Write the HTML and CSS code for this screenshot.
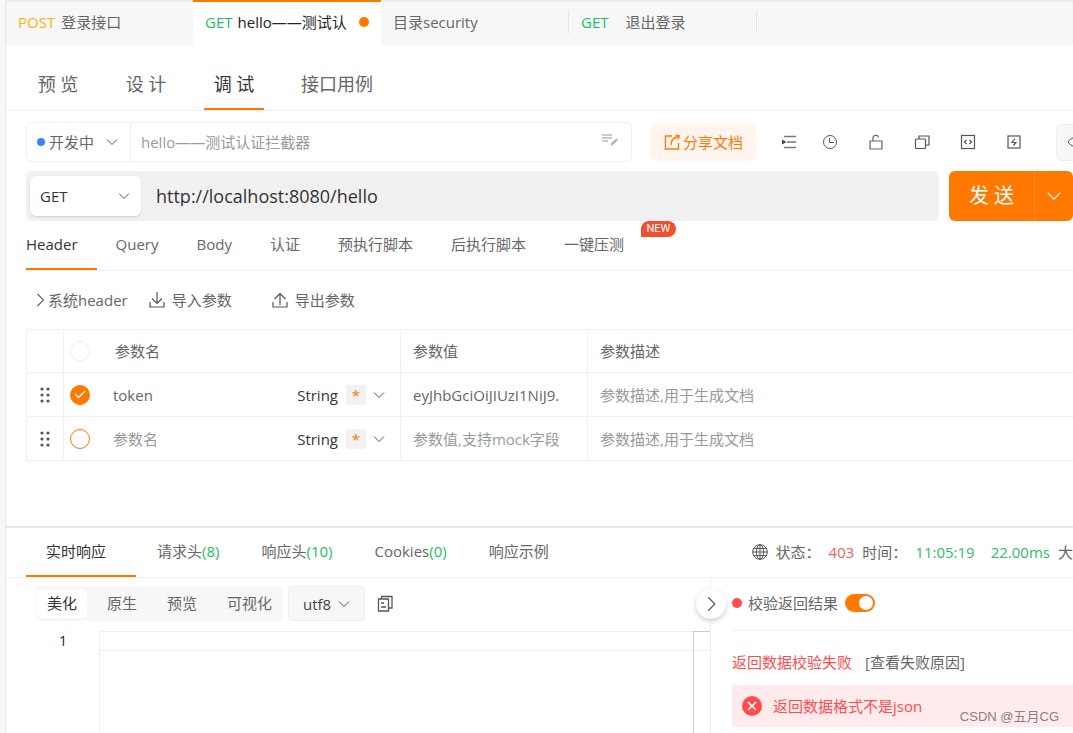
FILE: index.html
```html
<!DOCTYPE html>
<html lang="zh-CN">
<head>
<meta charset="utf-8">
<title>接口调试</title>
<link rel="stylesheet" href="styles.css">
</head>
<body>
<svg class="defs" aria-hidden="true">
  <symbol id="down" viewBox="0 0 12 8"><path d="M1 1.500 6 6.500 11 1.500" fill="none" stroke="currentColor"/></symbol>
  <symbol id="right" viewBox="0 0 8 14"><path d="M1 1 7 7 1 13" fill="none" stroke="currentColor" stroke-width="1.200"/></symbol>
  <symbol id="grip" viewBox="0 0 10 16"><g fill="#555"><circle cx="2" cy="2" r="1.600"/><circle cx="8" cy="2" r="1.600"/><circle cx="2" cy="8" r="1.600"/><circle cx="8" cy="8" r="1.600"/><circle cx="2" cy="14" r="1.600"/><circle cx="8" cy="14" r="1.600"/></g></symbol>
</svg>
<div class="app">
  <header class="file-tabs">
    <button class="file-tab"><span class="post">POST</span><span>登录接口</span></button>
    <button class="file-tab active"><span class="get">GET</span><span>hello——测试认</span><i class="unsaved"></i></button>
    <button class="file-tab divided"><span>目录security</span></button>
    <button class="file-tab divided spaced"><span class="get">GET</span><span>退出登录</span></button>
  </header>

  <nav class="mode-tabs">
    <button class="mode">预 览</button>
    <button class="mode">设 计</button>
    <button class="mode active">调 试</button>
    <button class="mode">接口用例</button>
  </nav>

  <main class="request">
    <div class="name-row">
      <div class="name-box">
        <button class="state"><i class="blue-dot"></i>开发中<svg class="chev"><use href="#down"/></svg></button>
        <input class="name-input" aria-label="接口名称" placeholder="hello——测试认证拦截器">
        <button class="plain note" aria-label="备注"><svg width="18" height="14" viewBox="0 0 18 14"><path d="M1 2h10M1 5h10M1 8h6" fill="none" stroke="#bbb" stroke-width="1.600"/><path d="M9.500 13l1-3 4.500-4 1.500 1.500-5 4.500z" fill="#aaa"/><path d="M15.500 5.500 17 7" stroke="#aaa"/></svg></button>
      </div>
      <button class="share"><svg width="17" height="17" viewBox="0 0 17 17" fill="none" stroke="currentColor" stroke-width="1.300"><path d="M8 2H1.500v13h13V9"/><path d="M7 11c0-4 2-7.500 7.500-8.500M11.500.800l4 1.200-2 3.500"/></svg>分享文档</button>
      <div class="tools">
        <button class="tool first" aria-label="缩进"><svg viewBox="0 0 16 16"><path d="M3 2.500h12M6 8h9M3 13.500h12" stroke="#777" stroke-width="1.300"/><path d="M1 5.500 5.500 8 1 10.500z" fill="#444"/></svg></button>
        <button class="tool" aria-label="历史"><svg viewBox="0 0 16 16" fill="none" stroke="#555"><circle cx="8" cy="8" r="6.500"/><path d="M7.500 4v4.500H12"/></svg></button>
        <button class="tool" aria-label="锁定"><svg viewBox="0 0 16 16" fill="none" stroke="#666" stroke-width="1.200"><path d="M2 7h12v8H2zM5 7V4c0-3.500 5.500-3.500 5.500-.500"/></svg></button>
        <button class="tool" aria-label="复制"><svg viewBox="0 0 16 16" fill="none" stroke="#555" stroke-width="1.200"><rect x="1.500" y="5" width="10" height="9.500" rx="1"/><path d="M5 5V2h10v9h-3.500"/></svg></button>
        <button class="tool" aria-label="代码"><svg viewBox="0 0 16 16" fill="none" stroke="#555" stroke-width="1.200"><rect x="1.500" y="1.500" width="13" height="13"/><path d="M6.500 6 4.500 8l2 2M9.500 6l2 2-2 2"/></svg></button>
        <button class="tool" aria-label="快捷"><svg viewBox="0 0 16 16" fill="none" stroke="#555" stroke-width="1.200"><rect x="2" y="2" width="12" height="12"/><path d="M9 4.500 6 8.500h4L7.500 11.500"/></svg></button>
      </div>
      <button class="view" aria-label="查看"><svg width="20" height="12" viewBox="0 0 20 12" fill="none" stroke="#555"><path d="M1 6c4-6.500 14-6.500 18 0-4 6.500-14 6.500-18 0z"/><circle cx="10" cy="6" r="3"/></svg></button>
    </div>

    <div class="url-row">
      <div class="url-box">
        <div class="method"><select aria-label="请求方法"><option>GET</option><option>POST</option></select><svg class="chev"><use href="#down"/></svg></div>
        <input class="url" aria-label="请求地址" value="http://localhost:8080/hello">
      </div>
      <div class="send-group">
        <button class="send">发 送</button>
        <button class="send-more" aria-label="更多发送选项"><svg width="16" height="10"><use href="#down"/></svg></button>
      </div>
    </div>

    <nav class="param-tabs">
      <button class="ptab active">Header</button>
      <button class="ptab">Query</button>
      <button class="ptab">Body</button>
      <button class="ptab">认证</button>
      <button class="ptab">预执行脚本</button>
      <button class="ptab">后执行脚本</button>
      <button class="ptab">一键压测<span class="new">NEW</span></button>
    </nav>

    <div class="actions">
      <button class="action system"><svg width="9" height="14"><use href="#right"/></svg>系统header</button>
      <button class="action"><svg width="16" height="16" viewBox="0 0 16 16" fill="none" stroke="#555" stroke-width="1.200"><path d="M8 0v11M3 6.500l5 5 5-5M1 10v5h14v-5"/></svg>导入参数</button>
      <button class="action export"><svg width="16" height="16" viewBox="0 0 16 16" fill="none" stroke="#555" stroke-width="1.200"><path d="M8 13V2M2.500 7 8 1.500 13.500 7M1 10v5h14v-5"/></svg>导出参数</button>
    </div>

    <table class="params">
      <colgroup><col class="c-grip"><col class="c-name"><col class="c-value"><col></colgroup>
      <thead>
        <tr>
          <th></th>
          <th><div class="name-cell"><input type="checkbox" class="check faint" aria-label="全选"><span class="head-name">参数名</span></div></th>
          <th>参数值</th>
          <th>参数描述</th>
        </tr>
      </thead>
      <tbody>
        <tr>
          <td class="grip"><svg width="10" height="16"><use href="#grip"/></svg></td>
          <td><div class="name-cell"><span class="check-wrap"><input type="checkbox" class="check" aria-label="启用 token" checked><svg class="tick" width="12" height="9" viewBox="0 0 12 9"><path d="M1 4l3.500 3.500L11 1" fill="none" stroke="#fff" stroke-width="1.300"/></svg></span><input class="cell" aria-label="参数名" value="token"><button class="type">String<span class="star">*</span><svg class="chev"><use href="#down"/></svg></button></div></td>
          <td><input class="cell" aria-label="参数值" value="eyJhbGciOiJIUzI1NiJ9."></td>
          <td><input class="cell" aria-label="参数描述" placeholder="参数描述,用于生成文档"></td>
        </tr>
        <tr>
          <td class="grip"><svg width="10" height="16"><use href="#grip"/></svg></td>
          <td><div class="name-cell"><span class="check-wrap"><input type="checkbox" class="check" aria-label="启用参数"></span><input class="cell" aria-label="参数名" placeholder="参数名"><button class="type">String<span class="star">*</span><svg class="chev"><use href="#down"/></svg></button></div></td>
          <td><input class="cell" aria-label="参数值" placeholder="参数值,支持mock字段"></td>
          <td><input class="cell" aria-label="参数描述" placeholder="参数描述,用于生成文档"></td>
        </tr>
      </tbody>
    </table>
  </main>

  <section class="response">
    <div class="res-head">
      <nav class="res-tabs">
        <button class="rtab active">实时响应</button>
        <button class="rtab">请求头<b>(8)</b></button>
        <button class="rtab">响应头<b>(10)</b></button>
        <button class="rtab">Cookies<b>(0)</b></button>
        <button class="rtab">响应示例</button>
      </nav>
      <div class="status">
        <svg width="16" height="16" viewBox="0 0 16 16" fill="none" stroke="#555"><circle cx="8" cy="8" r="7.300"/><ellipse cx="8" cy="8" rx="3.500" ry="7.300"/><path d="M8 .500v15M.500 8h15M1.500 4.500h13M1.500 11.500h13"/></svg>
        <span class="label">状态：</span><span class="code">403</span><span class="label">时间：</span><span class="ok">11:05:19</span><span class="ok">22.00ms</span><span>大</span>
      </div>
    </div>
    <div class="res-body">
      <div class="output">
        <div class="formats">
          <div class="segment">
            <button class="seg active">美化</button>
            <button class="seg">原生</button>
            <button class="seg">预览</button>
            <button class="seg">可视化</button>
          </div>
          <button class="charset">utf8<svg class="chev"><use href="#down"/></svg></button>
          <button class="plain copy" aria-label="复制响应"><svg width="16" height="17" viewBox="0 0 16 17" fill="none" stroke="#555" stroke-width="1.300"><path d="M1.500 4h10v12h-10zM4.500 4V1.500H15V13h-3.500M4 8h3M4 12h5"/></svg></button>
        </div>
        <div class="editor">
          <div class="gutter">1</div>
          <div class="code-area"><div class="line"></div></div>
          <div class="ruler"><div class="ruler-line"></div></div>
        </div>
      </div>
      <aside class="verify">
        <button class="fold" aria-label="收起"><svg width="9" height="16"><use href="#right"/></svg></button>
        <div class="verify-head"><i class="red-dot"></i><label for="verify">校验返回结果</label><input type="checkbox" class="switch" id="verify" checked></div>
        <div class="verify-result"><span class="fail">返回数据校验失败</span><a class="reason" href="#reason">[查看失败原因]</a></div>
        <div class="alert"><svg width="20" height="20" viewBox="0 0 20 20"><circle cx="10" cy="10" r="10" fill="#ff4d4f"/><path d="M6 6l8 8M14 6l-8 8" stroke="#fff" stroke-width="1.600"/></svg>返回数据格式不是json</div>
        <span class="watermark">CSDN @五月CG</span>
      </aside>
    </div>
  </section>
</div>
</body>
</html>
```
FILE: styles.css
```css
* { box-sizing: border-box; }
body {
  margin: 0;
  overflow: hidden;
  background: #fff;
  color: #666;
  font: 15px/20px "Open Sans", "Noto Sans CJK SC", sans-serif;
}
button, input, select { font: inherit; color: inherit; background: none; border: 0; padding: 0; margin: 0; outline: 0; }
button { white-space: nowrap; }
svg { display: block; flex: none; }
.defs { display: none; }
.chev { width: 12px; height: 8px; color: #555; }
.plain { flex: none; }

.app { height: 100vh; display: flex; flex-direction: column; margin-left: 5px; border-left: 1px solid #e8e8e8; box-shadow: -5px 0 0 #f7f7f7; overflow: hidden; }

.file-tabs { display: flex; flex: none; height: 45px; background: #f7f7f7; box-shadow: inset 0 2px 1px #ececec; }
.file-tab { display: flex; align-items: center; gap: 6px; width: 188px; padding: 0 12px 2px; position: relative; }
.file-tab:first-child { width: 187px; }
.file-tab.active { padding-bottom: 4px; gap: 5px; background: #fff; border-top: 2px solid #ff7800; color: #222; }
.file-tab.divided::after { content: ""; position: absolute; right: 0; top: 10px; height: 23px; border-right: 1px solid #e4e4e4; }
.file-tab.spaced { gap: 17px; }
.post { color: #ffb400; }
.get { color: #1cbf5b; }
.unsaved { width: 10px; height: 10px; border-radius: 50%; background: #ff7800; margin-left: auto; }

.mode-tabs { display: flex; flex: none; height: 66px; padding-left: 22px; gap: 28px; border-bottom: 1px solid #f0f0f0; font-size: 18px; }
.mode { padding: 14px 9px 0; min-width: 60px; border-bottom: 2px solid transparent; }
.mode.active { color: #333; border-color: #ff7800; }

.request { flex: none; height: 415px; padding-left: 20px; }
.name-row { display: flex; align-items: center; height: 60px; padding-top: 2px; margin-right: -23px; }
.name-box { flex: 1; display: flex; align-items: center; height: 40px; border: 1px solid #f0f0f0; border-radius: 6px; min-width: 0; }
.state { display: flex; align-items: center; height: 38px; width: 104px; padding-left: 10px; border-right: 1px solid #f0f0f0; }
.state .chev { margin-left: 12px; }
.blue-dot { width: 8px; height: 8px; border-radius: 50%; background: #3a84ff; margin-right: 4px; }
.name-input { flex: 1; min-width: 0; padding: 0 10px; }
::placeholder { color: #999; opacity: 1; }
.note { margin-right: 12px; padding-bottom: 5px; }
.share { display: flex; align-items: center; justify-content: center; gap: 2px; width: 105px; height: 37px; margin-left: 19px; border-radius: 6px; background: #fff5ee; color: #ff7800; }
.tools { display: flex; margin: 0 19px 0 15px; }
.tool { width: 46px; display: flex; justify-content: center; }
.tool.first { width: 36px; }
.tool svg { width: 16px; height: 16px; }
.view { width: 40px; height: 37px; padding-left: 10px; background: #f7f7f7; border: 1px solid #eee; border-radius: 6px; }

.url-row { display: flex; gap: 10px; height: 50px; }
.url-box { flex: 1; display: flex; align-items: center; padding: 0 4px; background: #f1f1f1; border-radius: 6px; color: #333; }
.method { display: grid; align-items: center; width: 111px; height: 40px; border-radius: 6px; background: #fff; box-shadow: 0 1px 2px #ccc; }
.method select { grid-area: 1 / 1; height: 40px; padding: 0 10px; appearance: none; }
.method .chev { grid-area: 1 / 1; justify-self: end; margin-right: 11px; pointer-events: none; }
.url { flex: 1; min-width: 0; padding: 0 15px; font-size: 18px; }
.send-group { display: flex; width: 124px; border-radius: 6px; background: #ff7800; color: #fff; }
.send { flex: 1; font-size: 20px; }
.send-more { width: 39px; border-left: 1px solid #ff9233; display: flex; align-items: center; justify-content: center; }

.param-tabs { display: flex; gap: 19px; height: 50px; border-bottom: 1px solid #f0f0f0; }
.ptab { padding: 0 19px 2px 0; border-bottom: 2px solid transparent; position: relative; }
.ptab.active { color: #333; border-color: #ff7800; }
.new { position: absolute; left: 77px; top: 0; width: 35px; height: 16px; border-radius: 8px 8px 8px 0; background: #f0502f; color: #fff; font: 11px/16px Roboto, sans-serif; }

.actions { display: flex; align-items: center; height: 58px; padding-left: 10px; gap: 21px; }
.action { display: flex; align-items: center; gap: 7px; }
.action.system { gap: 3px; }
.action.export { margin-left: 19px; }

.params { width: 100%; table-layout: fixed; border-collapse: collapse; }
.params th, .params td { height: 44px; padding: 0 12px; border: 1px solid #f0f0f0; border-right: 0; text-align: left; font-weight: 400; }
.params th { height: 43px; }
.params th:nth-child(2), .params td:nth-child(2) { padding: 0 15px 0 6px; }
.c-grip { width: 37px; }
.c-name { width: 337px; }
.c-value { width: 187px; }
.grip svg { margin: 0 auto; }
.name-cell { display: flex; align-items: center; }
.check-wrap { display: grid; place-items: center; }
.check { grid-area: 1 / 1; flex: none; appearance: none; width: 20px; height: 20px; border: 1px solid #ff7800; border-radius: 50%; }
.check:checked { background: #ff7800; }
.check.faint { border-color: #eee; }
.tick { grid-area: 1 / 1; pointer-events: none; }
.head-name { margin-left: 25px; }
.cell { width: 100%; min-width: 0; }
.name-cell .cell { flex: 1; margin-left: 23px; }
.type { display: flex; align-items: center; color: #333; }
.star { width: 20px; height: 20px; margin: 0 7px 0 8px; border-radius: 2px; background: #f1f1f1; color: #ff7800; }

.response { flex: 1; min-height: 0; display: flex; flex-direction: column; border-top: 2px solid #e8e8e8; }
.res-head { display: flex; flex: none; height: 50px; padding-left: 20px; border-bottom: 1px solid #f0f0f0; }
.res-tabs { display: flex; flex: 1; }
.rtab { padding: 0 21px 2px; border-bottom: 2px solid transparent; }
.rtab b { color: #1cbf5b; font-weight: 400; }
.rtab.active { width: 110px; padding: 0 30px 2px 20px; color: #333; border-color: #ff7800; }
.status { display: flex; align-items: center; flex: 0 0 321px; padding-bottom: 2px; white-space: nowrap; }
.label { margin-left: 8px; }
.code { color: #f5605c; margin-left: 8px; }
.ok { color: #2fbd68; margin: 0 8px; }

.res-body { display: flex; flex: 1; min-height: 0; }
.output { flex: 1; min-width: 0; display: flex; flex-direction: column; }
.formats { display: flex; align-items: center; height: 53px; padding: 0 0 2px 30px; gap: 5px; }
.segment { display: flex; align-items: center; gap: 10px; height: 35px; padding: 0 1px; border-radius: 5px; background: #f7f7f7; }
.seg { height: 28px; padding: 0 10px 2px; border-radius: 4px; }
.seg.active { background: #fff; color: #333; }
.charset { display: flex; align-items: center; justify-content: center; gap: 7px; width: 77px; height: 35px; border: 1px solid #eee; border-radius: 4px; background: #f7f7f7; color: #444; }
.copy { margin-left: 7px; }
.editor { flex: 1; display: flex; }
.gutter { width: 93px; padding-right: 32px; text-align: right; color: #0b216f; font-size: 14px; }
.code-area { flex: 1; border-left: 1px solid #eee; }
.line { height: 20px; border: solid #eee; border-width: 1px 0; }
.ruler { width: 17px; border-left: 1px solid #ccc; border-top: 1px solid #ccc; }
.ruler-line { height: 19px; border-bottom: 1px solid #eee; }

.verify { flex: 0 0 363px; position: relative; padding-left: 21px; border-left: 1px solid #eee; }
.fold { position: absolute; left: -15px; top: 11px; width: 30px; height: 30px; padding-left: 11px; border-radius: 50%; background: #fff; box-shadow: 0 2px 5px #ccc; }
.verify-head { display: flex; align-items: center; height: 53px; padding-bottom: 2px; border-bottom: 1px solid #f0f0f0; }
.red-dot { width: 10px; height: 10px; border-radius: 50%; background: #ff4d4f; margin-right: 6px; }
.switch { appearance: none; display: flex; align-items: center; justify-content: flex-end; width: 30px; height: 18px; margin-left: 7px; padding: 0 2px; border-radius: 9px; background: #ff7800; }
.switch::after { content: ""; width: 14px; height: 14px; border-radius: 50%; background: #fff; }
.verify-result { display: flex; gap: 13px; padding: 21px 0 13px; }
.fail { color: #ff4d4f; }
.reason { color: inherit; text-decoration: none; }
.alert { display: flex; align-items: center; gap: 11px; height: 42px; padding-left: 10px; background: #ffebec; color: #ff4d4f; }
.watermark { position: absolute; right: 14px; bottom: 6px; font: 13px/20px "Liberation Sans", "Noto Sans CJK SC", sans-serif; color: #8a8080; }
```
